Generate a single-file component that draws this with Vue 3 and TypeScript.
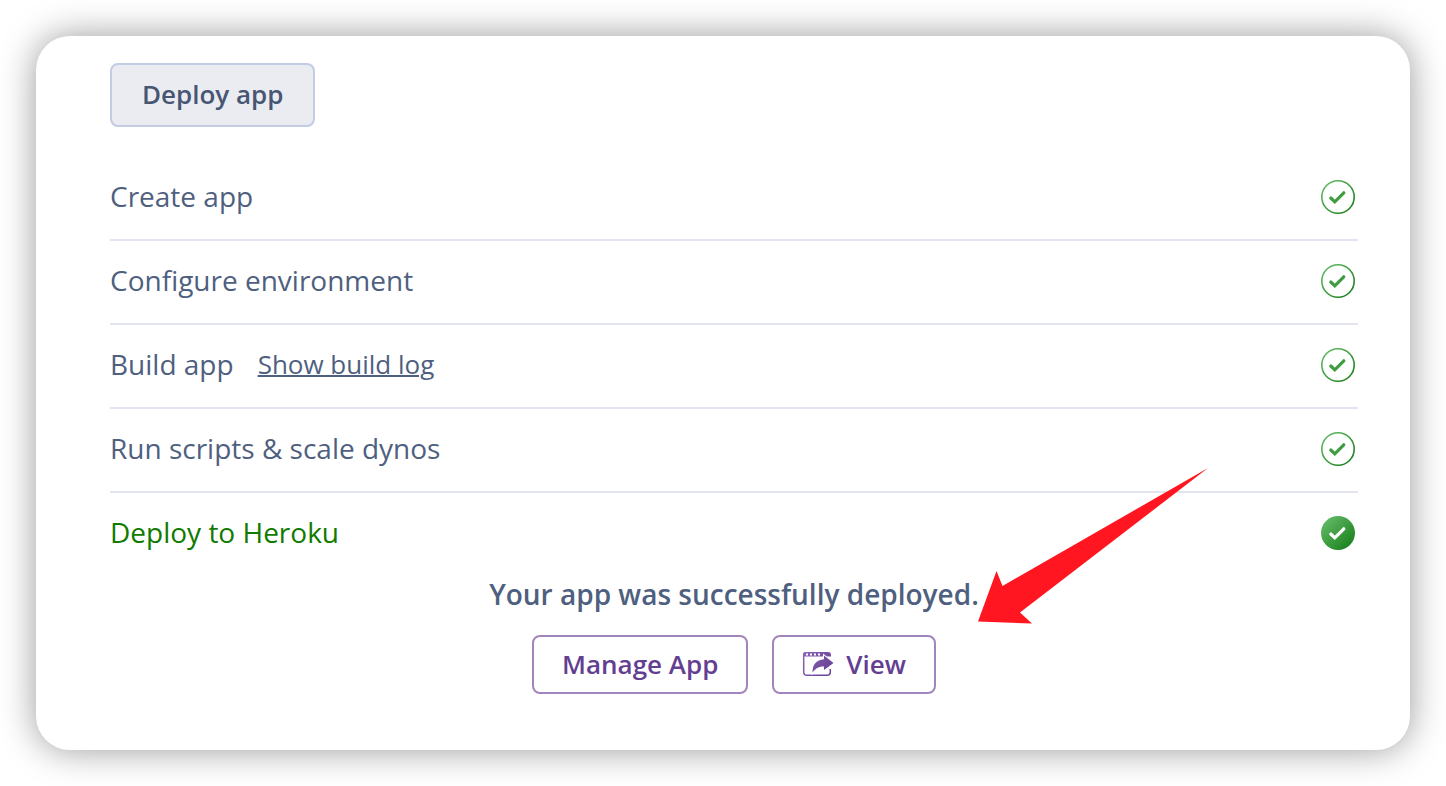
<script setup lang="ts">
interface Step {
  label: string
  log?: string
  final?: boolean
}

const steps: Step[] = [
  { label: 'Create app' },
  { label: 'Configure environment' },
  { label: 'Build app', log: 'Show build log' },
  { label: 'Run scripts & scale dynos' },
  { label: 'Deploy to Heroku', final: true },
]
</script>

<template>
  <main class="card">
    <button class="button deploy" type="button">Deploy app</button>

    <ul class="steps">
      <li v-for="step in steps" :key="step.label" class="step" :class="{ final: step.final }">
        <span class="label">{{ step.label }}</span>
        <a v-if="step.log" class="log" href="#log">{{ step.log }}</a>
        <svg class="status" viewBox="0 0 36 36" aria-hidden="true">
          <defs>
            <linearGradient :id="step.final ? 'fill-done' : 'ring-done'" x1="0" y1="0" x2="1" y2="1">
              <stop offset="0" stop-color="#6cc070" />
              <stop offset="1" stop-color="#117a12" />
            </linearGradient>
          </defs>
          <circle v-if="step.final" cx="18" cy="18" r="17" fill="url(#fill-done)" />
          <circle v-else cx="18" cy="18" r="16.2" fill="none" stroke="url(#ring-done)" stroke-width="1.6" />
          <path
            d="M10.8 19 L14.8 22.8 L23.8 13.8"
            fill="none"
            :stroke="step.final ? '#ffffff' : '#3f9c40'"
            stroke-width="3.2"
            stroke-linecap="round"
          />
        </svg>
      </li>
    </ul>

    <section class="result">
      <p class="message">Your app was successfully deployed.</p>
      <div class="actions">
        <button class="button action" type="button">Manage App</button>
        <button class="button action" type="button">
          <svg class="view-icon" viewBox="0 0 32 26" aria-hidden="true">
            <defs>
              <linearGradient id="view-tint" gradientUnits="userSpaceOnUse" x1="0" y1="0" x2="32" y2="26">
                <stop offset="0" stop-color="#8f66b8" />
                <stop offset="1" stop-color="#623b8e" />
              </linearGradient>
            </defs>
            <path
              d="M28.300 18 V21 Q28.300 24.300 25 24.300 H5 Q1.700 24.300 1.700 21 V4 Q1.700 1.700 4 1.700"
              fill="none"
              stroke="url(#view-tint)"
              stroke-width="1.500"
            />
            <path d="M1 5.500 V4 Q1 1 4 1 H26 Q29 1 29 4 V5.500 Z" fill="url(#view-tint)" />
            <path d="M4 3.500 H6 M8 3.500 H10 M12 3.500 H14 M16 3.500 H18" stroke="#ffffff" stroke-width="1.800" />
            <path
              d="M22 4.500 L31.500 12 L22 19 V15.500 C17 15.500 14 17 10.500 21.500 C10.500 14 14 8.800 22 8.300 Z"
              fill="url(#view-tint)"
              stroke="#ffffff"
              stroke-width="2"
              paint-order="stroke"
            />
          </svg>
          <span>View</span>
        </button>
      </div>
      <svg class="arrow" viewBox="0 0 230 156" aria-hidden="true">
        <path d="M230 0 L24.5 118 L18.5 103 L0 153.5 L54 155.500 L42 144.500 Z" fill="#ff1620" />
      </svg>
    </section>
  </main>
</template>

<style>
body {
  margin: 0;
  background: #ffffff;
}
</style>

<style scoped>
.card {
  margin: 36px;
  padding: 27px 52px 56px 74px;
  border-radius: 34px;
  background: #ffffff;
  box-shadow: 0 0 36px rgba(0, 0, 0, 0.4);
  color: #4f5f80;
  font-family: "Open Sans", "Noto Sans", sans-serif;
  font-size: 28px;
  line-height: 40px;
}

.button {
  box-sizing: border-box;
  border-radius: 8px;
  font-family: inherit;
  font-size: 26px;
  font-weight: 600;
  line-height: 36px;
  cursor: pointer;
}

.deploy {
  display: block;
  height: 64px;
  padding: 0 30px 2px;
  border: 2px solid #c2cce2;
  background: #ebecf2;
  color: #475672;
}

.steps {
  margin: 30px 0 0;
  padding: 0;
  list-style: none;
}

.step {
  display: flex;
  align-items: center;
  box-sizing: border-box;
  height: 84px;
  padding-bottom: 2px;
  border-bottom: 2px solid #e2e4f0;
}

.step.final {
  border-bottom-color: transparent;
  color: #117a00;
}

.label {
  padding-bottom: 3px;
}

.log {
  margin-left: 24px;
  padding-bottom: 2px;
  color: inherit;
  font-size: 26px;
  text-decoration-thickness: 2px;
}

.status {
  width: 36px;
  height: 36px;
  margin-left: auto;
  margin-right: 2px;
}

.result {
  position: relative;
  display: flex;
  flex-direction: column;
  align-items: center;
}

.message {
  margin: 0;
  font-weight: 600;
  line-height: 34px;
}

.actions {
  display: flex;
  gap: 24px;
  margin-top: 24px;
}

.action {
  display: flex;
  align-items: center;
  gap: 12px;
  height: 59px;
  padding: 0 28px 2px;
  border: 2px solid #a186bd;
  background: #ffffff;
  color: #633e91;
}

.view-icon {
  width: 32px;
  height: 26px;
}

.arrow {
  position: absolute;
  top: -109px;
  left: calc(50% + 244px);
  width: 230px;
  height: 156px;
  pointer-events: none;
}
</style>
